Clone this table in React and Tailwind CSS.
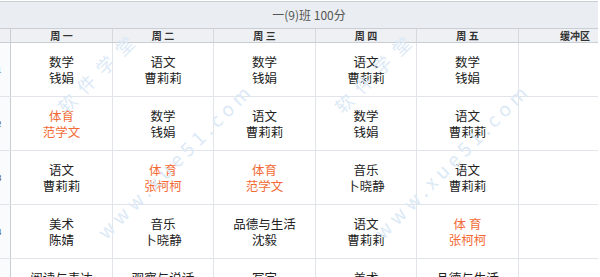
import React from 'react'

const days = ['周 一', '周 二', '周 三', '周 四', '周 五']

// [subject, teacher, isPE]
const rows = [
  [['数学', '钱娟'], ['语文', '曹莉莉'], ['数学', '钱娟'], ['语文', '曹莉莉'], ['数学', '钱娟']],
  [['体育', '范学文', true], ['数学', '钱娟'], ['语文', '曹莉莉'], ['数学', '钱娟'], ['语文', '曹莉莉']],
  [['语文', '曹莉莉'], ['体 育', '张柯柯', true], ['体育', '范学文', true], ['音乐', '卜晓静'], ['语文', '曹莉莉']],
  [['美术', '陈婧'], ['音乐', '卜晓静'], ['品德与生活', '沈毅'], ['语文', '曹莉莉'], ['体 育', '张柯柯', true]],
  [['阅读与表达', '钱娟'], ['观察与说话', '曹莉莉'], ['写字', '曹莉莉'], ['美术', '陈婧'], ['品德与生活', '沈毅']],
]

const cols = 'grid grid-cols-[11px_102px_101px_102px_101px_102px_79px]'

function Watermark({ left }) {
  return (
    <div className="absolute inset-y-0 pointer-events-none text-[#dce9f6] leading-none" style={{ left }}>
      <div className="absolute left-[60px] top-[100px] -rotate-45 origin-left text-[18px] tracking-[9px] whitespace-nowrap">
        软件学堂
      </div>
      <div className="absolute left-[100px] top-[225px] -rotate-45 origin-left text-[19px] tracking-[5px] whitespace-nowrap">
        www.xue51.com
      </div>
    </div>
  )
}

export default function App() {
  return (
    <div
      className="relative w-[600px] h-[277px] overflow-hidden bg-white pt-[1px]"
      style={{ fontFamily: '"Noto Sans CJK SC", "Noto Sans", sans-serif' }}
    >
      <div className="w-[598px] border-t border-[#c9ced4]">
        {/* Title */}
        <div className="h-[26px] bg-[#eaedf1] flex items-center justify-center pl-[20px] text-[12px] text-[#555]">
          一(9)班 100分
        </div>

        {/* Header */}
        <div className={`${cols} h-[15px] bg-[#eef0f3] border-t border-b border-[#c9ced4] text-[10px] font-bold text-[#333] leading-[13px]`}>
          <div className="border-r border-[#c9ced4]" />
          {days.map(d => (
            <div key={d} className="border-r border-[#d6dade] text-center whitespace-pre">{d}</div>
          ))}
          <div className="text-right pr-[8px]">缓冲区</div>
        </div>

        {/* Body */}
        {rows.map((row, i) => (
          <div key={i} className={`${cols} h-[54px] border-b border-[#e1e4e8] text-[12.5px] leading-[16px]`}>
            <div className="border-r border-[#c9ced4] bg-[#fafbfc] flex items-center overflow-hidden">
              <span className="text-[8px] text-[#444] -ml-[3px]">{i + 1}</span>
            </div>
            {row.map(([subj, teacher, pe], j) => (
              <div
                key={j}
                className={`border-r border-[#e1e4e8] flex flex-col items-center justify-center whitespace-pre ${pe ? 'text-[#f26b36]' : 'text-[#222]'}`}
              >
                <div>{subj}</div>
                <div>{teacher}</div>
              </div>
            ))}
            <div />
          </div>
        ))}
      </div>

      <Watermark left="0px" />
      <Watermark left="277px" />
    </div>
  )
}
